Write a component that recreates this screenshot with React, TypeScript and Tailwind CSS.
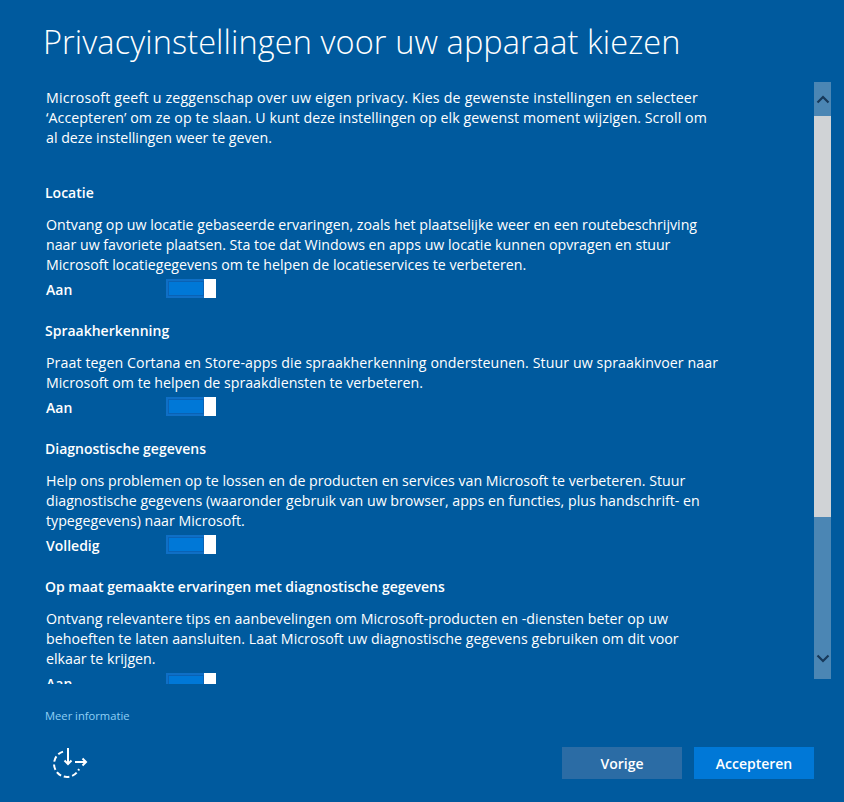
const sections = [
  {
    title: "Locatie",
    lines: [
      ["Ontvang op uw locatie gebaseerde ervaringen, zoals het plaatselijke weer en een routebeschrijving", ""],
      ["naar uw favoriete plaatsen. Sta toe dat Windows en apps uw locatie kunnen opvragen en stuur", ""],
      ["Microsoft locatiegegevens om te helpen de locatieservices te verbeteren.", ""],
    ],
    label: "Aan",
  },
  {
    title: "Spraakherkenning",
    lines: [
      ["Praat tegen Cortana en Store-apps die spraakherkenning ondersteunen. Stuur uw spraakinvoer naar", "tracking-[0.09px]"],
      ["Microsoft om te helpen de spraakdiensten te verbeteren.", ""],
    ],
    label: "Aan",
  },
  {
    title: "Diagnostische gegevens",
    lines: [
      ["Help ons problemen op te lossen en de producten en services van Microsoft te verbeteren. Stuur", ""],
      ["diagnostische gegevens (waaronder gebruik van uw browser, apps en functies, plus handschrift- en", ""],
      ["typegegevens) naar Microsoft.", ""],
    ],
    label: "Volledig",
  },
  {
    title: "Op maat gemaakte ervaringen met diagnostische gegevens",
    lines: [
      ["Ontvang relevantere tips en aanbevelingen om Microsoft-producten en -diensten beter op uw", "tracking-[0.04px]"],
      ["behoeften te laten aansluiten. Laat Microsoft uw diagnostische gegevens gebruiken om dit voor", "tracking-[0.03px]"],
      ["elkaar te krijgen.", ""],
    ],
    label: "Aan",
  },
];

function Toggle() {
  return (
    <div className="mt-[4px] flex h-[19px] w-[50px] border-2 border-r-0 border-[#0f6fc6] bg-[#0078d7]">
      <div className="flex-1 border border-[#0a62b5]" />
      <div className="-my-[2px] h-[19px] w-[12px] bg-white" />
    </div>
  );
}

export default function App() {
  return (
    <div className="h-[802px] w-[844px] overflow-hidden bg-[#005a9e] text-white [font-family:'Open_Sans','Noto_Sans',sans-serif]">
      <h1 className="h-[82px] pl-[43px] pt-[19px] text-[32.5px] leading-[46px] font-light tracking-[0.1px] whitespace-nowrap">
        Privacyinstellingen voor uw apparaat kiezen
      </h1>
      <div className="flex h-[602px]">
        <div className="w-[814px] overflow-hidden pl-[46px] pt-[6px] text-[14.2px] leading-[20px] whitespace-nowrap">
          <p className="tracking-[0.2px]">Microsoft geeft u zeggenschap over uw eigen privacy. Kies de gewenste instellingen en selecteer</p>
          <p className="tracking-[0.08px]">‘Accepteren’ om ze op te slaan. U kunt deze instellingen op elk gewenst moment wijzigen. Scroll om</p>
          <p>al deze instellingen weer te geven.</p>
          <div className="pt-[35px]">
            {sections.map((s) => (
              <section key={s.title} className="-ml-px pb-[20px]">
                <h2 className="h-[32px] text-[14px] font-semibold">{s.title}</h2>
                <div className="pl-px">
                  {s.lines.map(([text, cls]) => (
                    <p key={text} className={cls}>{text}</p>
                  ))}
                  <div className="flex h-[26px] items-start">
                    <span className="w-[120px] pt-[5px] text-[14px] font-semibold">{s.label}</span>
                    <Toggle />
                  </div>
                </div>
              </section>
            ))}
          </div>
        </div>
        <div className="flex h-[597px] w-[17px] flex-col bg-[#4b86b4]">
          <div className="flex h-[34px] items-center justify-center">
            <svg width="14" height="9" viewBox="0 0 14 9" fill="none" stroke="#17395a" strokeWidth="2.2">
              <path d="M1.5 7.5 7 2l5.5 5.5" />
            </svg>
          </div>
          <div className="h-[401px] bg-[#d0d3d6]" />
          <div className="flex flex-1 items-end justify-center pb-[16px]">
            <svg width="14" height="9" viewBox="0 0 14 9" fill="none" stroke="#17395a" strokeWidth="2.2">
              <path d="M1.5 1.5 7 7l5.5-5.5" />
            </svg>
          </div>
        </div>
      </div>
      <div className="pl-[45px] pt-[24px] text-[11.2px] leading-[16px] text-[#8fd0f5]">Meer informatie</div>
      <div className="flex items-start pl-[52px] pr-[30px] pt-[23px]">
        <svg width="36" height="32" viewBox="0 0 36 32" fill="none" stroke="white" strokeWidth="2">
          <path d="M11 4.600A13 13 0 1 0 27 22" strokeDasharray="5.500 2.800" />
          <path d="M16 1v16M12.500 13.500 16 17l3.500-3.500" />
          <path d="M23 15h11M30.500 11.500 34 15l-3.500 3.500" />
        </svg>
        <div className="ml-auto flex gap-[12px]">
          <button className="h-[32px] w-[120px] bg-[#2b6ca5] pt-px text-[14px] font-semibold">Vorige</button>
          <button className="h-[32px] w-[120px] bg-[#0078d7] pt-px text-[14px] font-semibold">Accepteren</button>
        </div>
      </div>
    </div>
  );
}
